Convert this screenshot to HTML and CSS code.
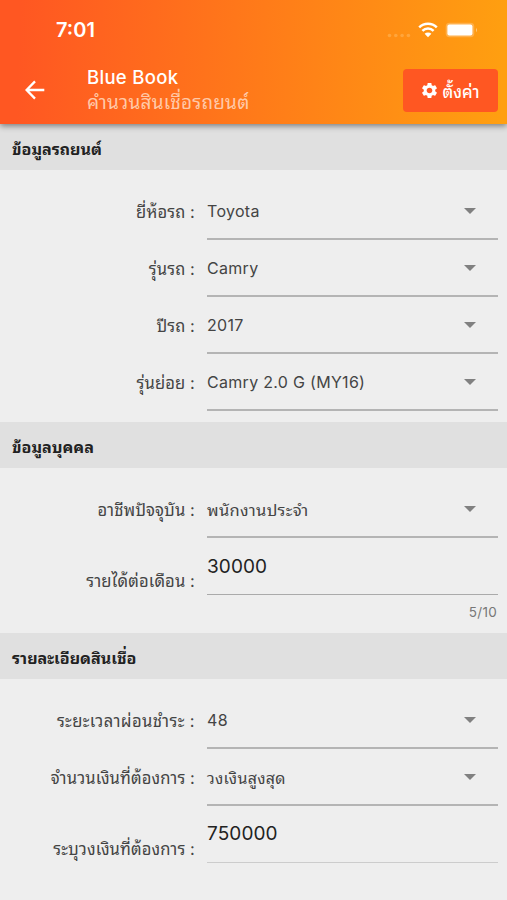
FILE: index.html
```html
<!DOCTYPE html>
<html lang="th">
<head>
<meta charset="utf-8">
<title>Blue Book</title>
<link rel="stylesheet" href="styles.css">
</head>
<body>
<header class="header">
  <div class="status">
    <span class="time">7:01</span>
    <div class="indicators">
      <svg class="dots" width="24" height="5" viewBox="0 0 24 5"><circle cx="2.5" cy="2.5" r="1.8"/><circle cx="8.8" cy="2.5" r="1.8"/><circle cx="15.1" cy="2.5" r="1.8"/><circle cx="21.4" cy="2.5" r="1.8"/></svg>
      <svg class="wifi" width="20" height="16" viewBox="0 0 20 16"><path d="M1.2 5.4a12.7 12.7 0 0 1 17.6 0M4.4 8.8a8 8 0 0 1 11.2 0" fill="none" stroke="#fff" stroke-width="2.5"/><path d="M6.6 11.8a4.9 4.9 0 0 1 6.8 0L10 15.2z" fill="#fff"/></svg>
      <svg class="battery" width="33" height="16" viewBox="0 0 33 16"><rect x=".7" y=".7" width="28.6" height="14.6" rx="4" fill="#ffb04c"/><rect x="2.4" y="2.6" width="25" height="10.8" rx="2" fill="#fff"/><path d="M31 5.7q2 2.3 0 4.6z" fill="#ffc67f"/></svg>
    </div>
  </div>
  <div class="appbar">
    <svg class="back" width="20" height="20" viewBox="0 0 20 20"><path d="M19.3 10H2M10 1.4 1.6 10 10 18.6" fill="none" stroke="#fff" stroke-width="2.3"/></svg>
    <div class="titles">
      <h1 class="title">Blue Book</h1>
      <p class="subtitle">คำนวนสินเชื่อรถยนต์</p>
    </div>
    <button class="settings">
      <svg width="19" height="19" viewBox="0 0 24 24"><path fill="#fff" d="M19.14 12.94c.04-.3.06-.61.06-.94 0-.32-.02-.64-.07-.94l2.03-1.58c.18-.14.23-.41.12-.61l-1.92-3.32c-.12-.22-.37-.29-.59-.22l-2.39.96c-.5-.38-1.03-.7-1.62-.94l-.36-2.54c-.04-.24-.24-.41-.48-.41h-3.84c-.24 0-.43.17-.47.41l-.36 2.54c-.59.24-1.13.57-1.62.94l-2.39-.96c-.22-.08-.47 0-.59.22L2.74 8.87c-.12.21-.08.47.12.61l2.03 1.58c-.05.3-.09.63-.09.94s.02.64.07.94l-2.03 1.58c-.18.14-.23.41-.12.61l1.92 3.32c.12.22.37.29.59.22l2.39-.96c.5.38 1.03.7 1.62.94l.36 2.54c.05.24.24.41.48.41h3.84c.24 0 .44-.17.47-.41l.36-2.54c.59-.24 1.13-.56 1.62-.94l2.39.96c.22.08.47 0 .59-.22l1.92-3.32c.12-.22.07-.47-.12-.61l-2.01-1.58zM12 15.6c-1.98 0-3.6-1.62-3.6-3.6s1.62-3.6 3.6-3.6 3.6 1.62 3.6 3.6-1.62 3.6-3.6 3.6z"/></svg>
      <span class="settings-text">ตั้งค่า</span>
    </button>
  </div>
</header>
<main>
  <h2 class="section-title"><span>ข้อมูลรถยนต์</span></h2>
  <section class="fields">
    <div class="row"><span class="label">ยี่ห้อรถ :</span><div class="select"><span>Toyota</span><i class="caret"></i></div></div>
    <div class="row"><span class="label">รุ่นรถ :</span><div class="select"><span>Camry</span><i class="caret"></i></div></div>
    <div class="row"><span class="label">ปีรถ :</span><div class="select"><span>2017</span><i class="caret"></i></div></div>
    <div class="row"><span class="label">รุ่นย่อย :</span><div class="select"><span>Camry 2.0 G (MY16)</span><i class="caret"></i></div></div>
  </section>
  <h2 class="section-title"><span>ข้อมูลบุคคล</span></h2>
  <section class="fields personal">
    <div class="row"><span class="label">อาชีพปัจจุบัน :</span><div class="select"><span class="job">พนักงานประจำ</span><i class="caret"></i></div></div>
    <div class="row input-row"><span class="label">รายได้ต่อเดือน :</span><div class="input">30000</div></div>
    <p class="counter">5/10</p>
  </section>
  <h2 class="section-title"><span>รายละเอียดสินเชื่อ</span></h2>
  <section class="fields">
    <div class="row"><span class="label term">ระยะเวลาผ่อนชำระ :</span><div class="select"><span>48</span><i class="caret"></i></div></div>
    <div class="row"><span class="label">จำนวนเงินที่ต้องการ :</span><div class="select"><span>วงเงินสูงสุด</span><i class="caret"></i></div></div>
    <div class="row input-row"><span class="label limit">ระบุวงเงินที่ต้องการ :</span><div class="input disabled">750000</div></div>
  </section>
</main>
</body>
</html>
```
FILE: styles.css
```css
* { box-sizing: border-box; }
body {
  margin: 0;
  height: 900px;
  overflow: hidden;
  background: #eee;
  color: #444;
  font-family: Inter, Thonburi, "Noto Sans Thai Looped", "Loma", "Garuda", "Waree", "Umpush", "Tlwg Typo", "FreeSerif", sans-serif;
}
h1, h2, p { margin: 0; }
.header {
  position: relative;
  height: 124px;
  background: linear-gradient(92deg, #ff5722 4%, #ff9f10 99%);
  box-shadow: 0 2px 6px rgba(0, 0, 0, .45);
  color: #fff;
}
.status {
  height: 60px;
  padding: 0 30px 0 56px;
  display: flex;
  align-items: center;
  justify-content: space-between;
}
.time { font-size: 20px; font-weight: 600; line-height: 24px; }
.indicators { display: flex; align-items: center; }
.dots { margin: 10px 7px 0 0; fill: #ffa53c; }
.wifi { margin-right: 7px; }
.battery { margin-right: -1px; }
.appbar { height: 60px; padding: 0 9px 0 25px; display: flex; align-items: center; }
.titles { margin-left: 42px; flex: 1; white-space: nowrap; }
.title { font-size: 18.5px; font-weight: 500; line-height: 26px; letter-spacing: .3px; }
.subtitle { font-size: 19px; line-height: 26px; color: #ffc9a8; letter-spacing: .2px; }
.settings {
  width: 95px;
  height: 43px;
  padding: 0 2px 0 0;
  display: flex;
  align-items: center;
  justify-content: center;
  gap: 4px;
  border: 0;
  border-radius: 4px;
  background: #ff5722;
  color: #fff;
  font-family: inherit;
  font-size: 16.5px;
  font-weight: 500;
}
.settings-text { padding-top: 1px; }
.section-title {
  height: 46px;
  padding: 1px 0 0 12px;
  display: flex;
  align-items: center;
  background: #e0e0e0;
  color: #222;
  font-size: 16.1px;
  font-weight: 700;
  white-space: nowrap;
}
.fields { padding: 13px 9px 11px 0; }
.row { height: 57px; display: grid; grid-template-columns: 195px 291px; column-gap: 12px; }
.label { align-self: center; justify-self: end; padding-top: 1px; font-size: 16.6px; line-height: 24px; letter-spacing: .1px; white-space: nowrap; }
.term { letter-spacing: .4px; }
.select {
  display: flex;
  padding-right: 22px;
  align-items: center;
  justify-content: space-between;
  border-bottom: 2px solid #b4b4b4;
  font-size: 16px;
  letter-spacing: .3px;
}
.job { font-size: 16.5px; }
.caret { border: 6px solid transparent; border-top-color: #808080; border-bottom: 0; }
.personal { height: 165px; padding-bottom: 0; }
.input-row .label { padding-top: 12px; height: 38px; align-self: end; }
.input { padding-top: 17px; border-bottom: 1px solid #aaa; font-size: 19px; line-height: 24px; color: #222; letter-spacing: .1px; }
.disabled { padding-top: 16px; border-color: #ccc; }
.counter { text-align: right; padding: 8px 1px 0 0; font-size: 13.5px; line-height: 18px; color: #777; letter-spacing: .3px; }
```
